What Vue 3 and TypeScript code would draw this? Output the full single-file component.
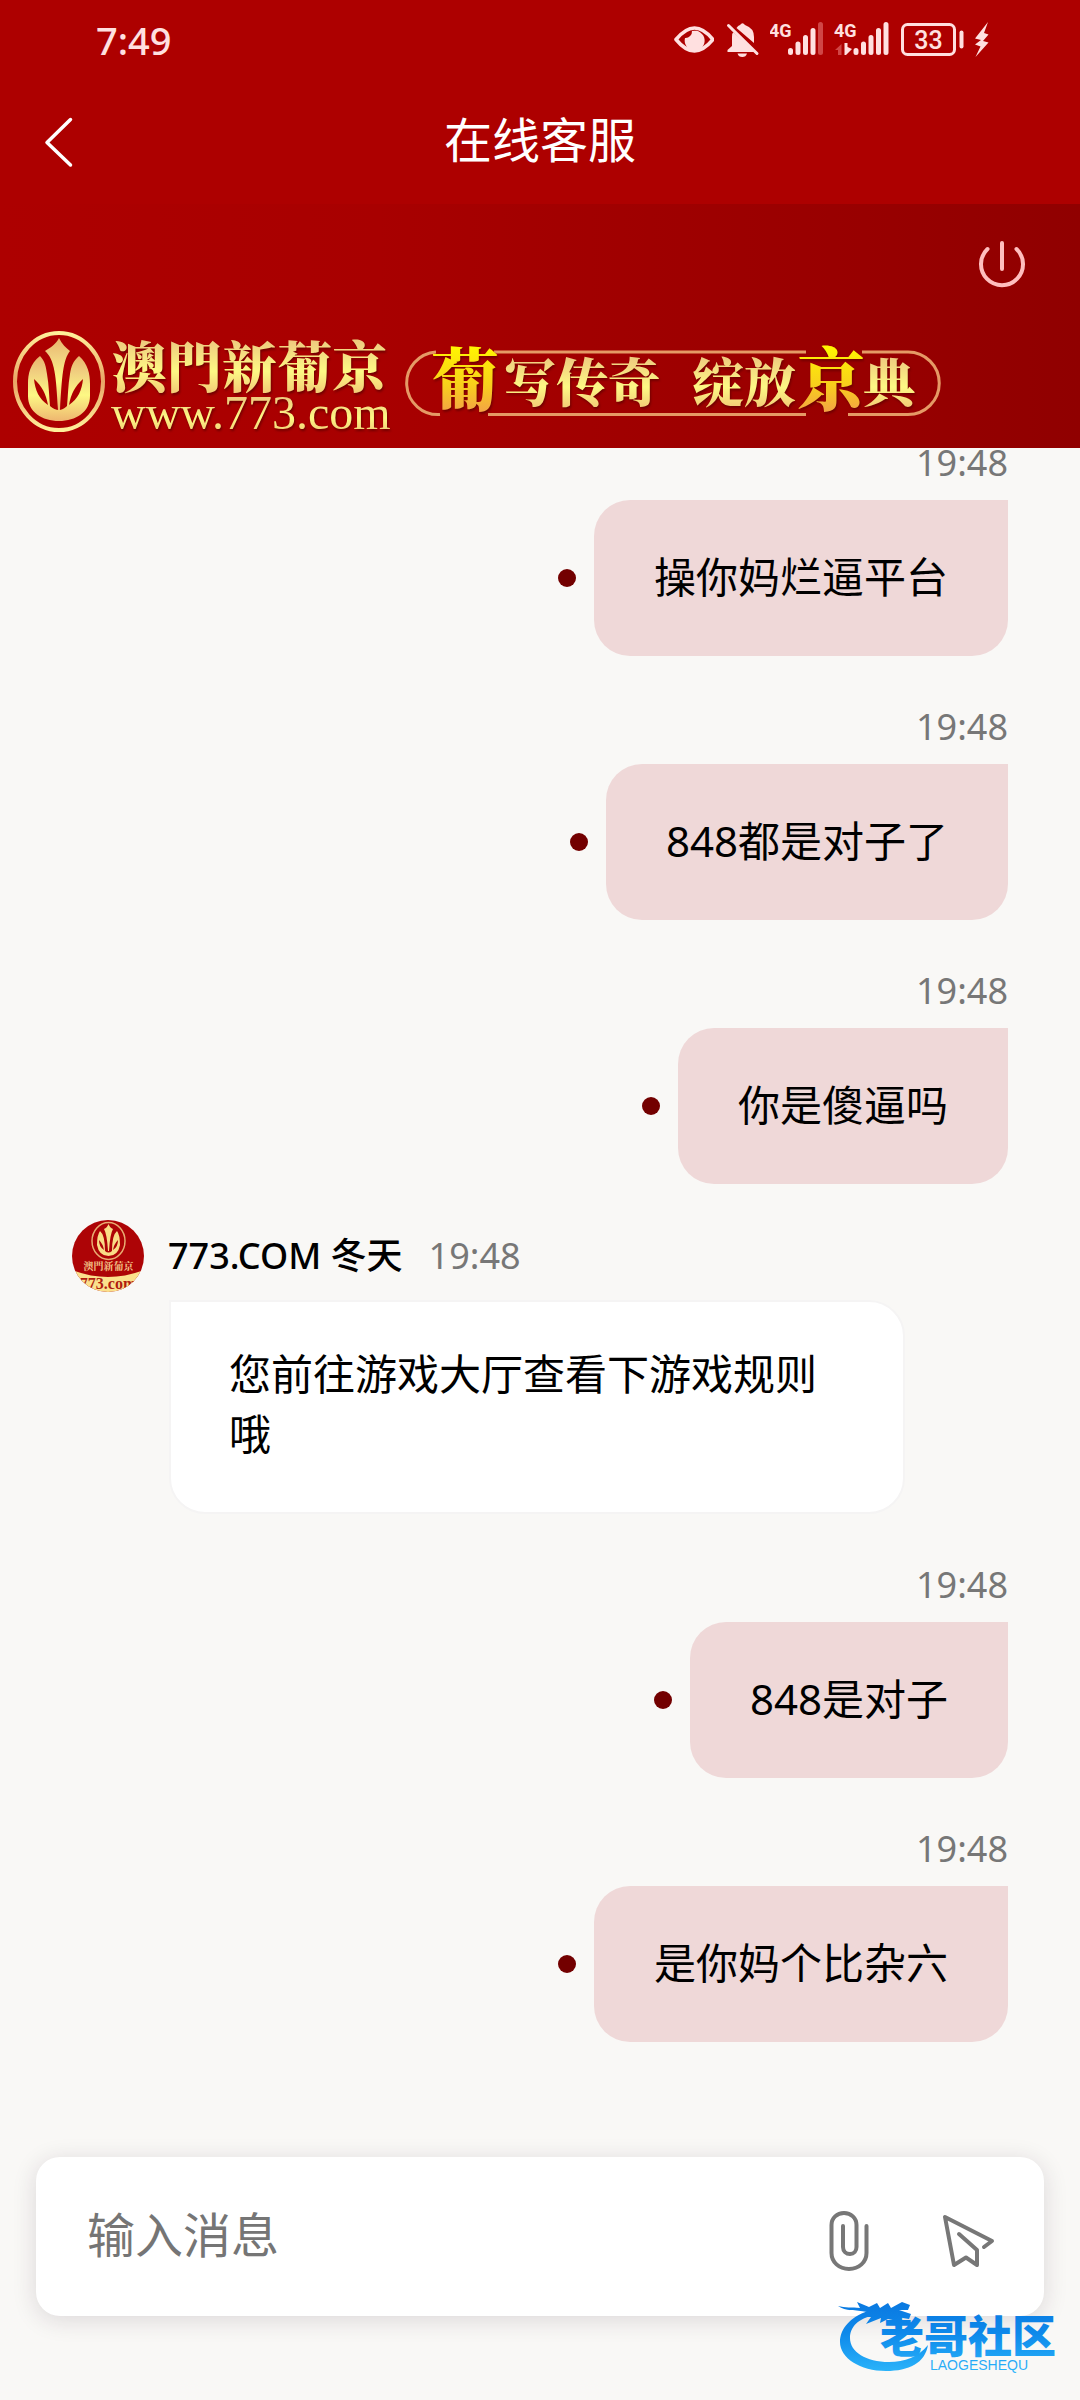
<script setup lang="ts">
import { ref } from 'vue'

interface Message {
  id: number
  from: 'me' | 'agent'
  text: string
  time: string
}

const messages: Message[] = [
  { id: 1, from: 'me', text: '操你妈烂逼平台', time: '19:48' },
  { id: 2, from: 'me', text: '848都是对子了', time: '19:48' },
  { id: 3, from: 'me', text: '你是傻逼吗', time: '19:48' },
  { id: 4, from: 'agent', text: '您前往游戏大厅查看下游戏规则哦', time: '19:48' },
  { id: 5, from: 'me', text: '848是对子', time: '19:48' },
  { id: 6, from: 'me', text: '是你妈个比杂六', time: '19:48' },
]

const draft = ref('')
</script>

<template>
  <div class="page">
    <header class="top">
      <div class="status">
        <span class="clock">7:49</span>
        <div class="status-icons">
          <svg width="40" height="40" viewBox="674 20 40 40" aria-hidden="true">
            <path d="M676 39.500C683 31 689 28 694.500 28S706 31 713 39.500C706 48 700 51 694.500 51S683 48 676 39.500Z" fill="none" stroke="#ffe0e0" stroke-width="3.600" stroke-linejoin="round" />
            <path d="M692 31A10 10 0 1 1 685 38A6.500 6.500 0 0 0 692 31Z" fill="#ffe0e0" />
          </svg>
          <svg width="36" height="40" viewBox="724 20 36 40" aria-hidden="true">
            <path d="M730 29L755 52H727.500V50L732 46V37Q732 33 734 31Z" fill="#ffe0e0" />
            <path d="M736.500 28Q738 25.500 740 25Q742.500 21.500 745 25Q754 28 754 37V43Z" fill="#ffe0e0" />
            <path d="M737.500 53.500H747Q746 57 742.300 57T737.500 53.500Z" fill="#ffe0e0" />
            <path d="M728.500 25.500L757 53.500" stroke="#ffe0e0" stroke-width="3" stroke-linecap="round" />
          </svg>
          <svg width="54" height="40" viewBox="770 20 54 40" aria-hidden="true">
            <text x="769" y="37" class="net">4G</text>
            <g stroke="#ffe0e0" stroke-width="5" stroke-linecap="round">
              <path d="M790.500 50.500V52.500M798 44V52.500M805.500 37.500V52.500M813 30.500V52.500" />
              <path d="M820.500 24.500V52.500" stroke="#d04646" />
            </g>
          </svg>
          <svg width="56" height="40" viewBox="834 20 56 40" aria-hidden="true">
            <text x="834" y="37" class="net">4G</text>
            <path d="M841.500 44V55H838V50H835Z" fill="#d04646" />
            <path d="M844.500 43H847.500V47L852 49L846 55H844.500Z" fill="#ffe0e0" />
            <path d="M856 50.500V52.500M863.500 44V52.500M871 37.500V52.500M878.500 30.500V52.500M886 24.500V52.500" stroke="#ffe0e0" stroke-width="5" stroke-linecap="round" />
          </svg>
          <svg width="64" height="40" viewBox="900 20 64 40" aria-hidden="true">
            <rect x="902.500" y="24.500" width="52" height="30" rx="5" fill="none" stroke="#ffe0e0" stroke-width="3" />
            <path d="M961.500 32.500V46.500" stroke="#ffe0e0" stroke-width="4" stroke-linecap="round" />
            <text x="928.500" y="49" text-anchor="middle" class="charge">33</text>
          </svg>
          <svg width="16" height="40" viewBox="973 20 16 40" aria-hidden="true">
            <path d="M987 22L974 38.500L980 40L974 44.500L979.500 46.500L974.500 57L987.500 42.500L982 41L987.500 34.500L983 33Z" fill="#ffe0e0" />
          </svg>
        </div>
      </div>
      <nav class="titlebar">
        <button type="button" class="icon-btn" aria-label="返回">
          <svg width="48" height="54" viewBox="34 114 48 54" aria-hidden="true">
            <path d="M70.500 118.500L47 141.500L70.500 164" fill="none" stroke="#fff" stroke-width="3.500" stroke-linecap="round" stroke-linejoin="round" />
          </svg>
        </button>
        <h1>在线客服</h1>
        <span></span>
      </nav>
    </header>

    <section class="banner">
      <button type="button" class="icon-btn power" aria-label="结束会话">
        <svg width="52" height="52" viewBox="976 238 52 52" aria-hidden="true">
          <path d="M987.500 249A21 21 0 1 0 1016.500 249M1002 243V269" fill="none" stroke="#ffbebe" stroke-width="4" stroke-linecap="round" />
        </svg>
      </button>
      <div class="brand">
        <svg width="380" height="108" viewBox="12 328 380 108" role="img" aria-label="澳門新葡京 www.773.com">
          <defs>
            <linearGradient id="gold" x1="0" y1="0" x2="0" y2="1">
              <stop offset="0" stop-color="#e9b56c" />
              <stop offset=".25" stop-color="#f0cf80" />
              <stop offset=".6" stop-color="#fdf884" />
              <stop offset="1" stop-color="#eeb670" />
            </linearGradient>
            <linearGradient id="ring" x1="0" y1="0" x2="0" y2="1">
              <stop offset="0" stop-color="#fff09a" />
              <stop offset=".5" stop-color="#e9a566" />
              <stop offset="1" stop-color="#fff09a" />
            </linearGradient>
          </defs>
          <ellipse cx="59" cy="381.500" rx="44" ry="48.500" fill="none" stroke="url(#ring)" stroke-width="4" />
          <path d="M40 356C30 364 28 374 28 384V396C28 412 42 421 59 421S90 412 90 396V384C90 374 88 364 79 356C73 361 71 367 70 374C68 385 68 396 67 406Q59 414 50 406C49 396 49 385 47 374C46 367 45 361 40 356Z" fill="url(#gold)" />
          <path d="M34 379C42 386 46 394 48 405C39 399 35 390 34 379ZM83 379C75 386 71 394 69 405C78 399 82 390 83 379Z" fill="#ad0000" />
          <path d="M59 338C62 344 66 348 70 351C63 360 62 376 60 410H58C56 376 55 360 45 351C50 348 56 344 59 338Z" fill="url(#gold)" />
          <g class="shade" fill="url(#gold)">
            <text x="112" y="387" class="brand-name">澳門新葡京</text>
            <text x="111" y="429" class="brand-url">www.773.com</text>
          </g>
        </svg>
        <svg width="538" height="108" viewBox="404 328 538 108" role="img" aria-label="葡写传奇 绽放京典">
          <defs>
            <linearGradient id="amber" x1="0" y1="0" x2="0" y2="1">
              <stop offset=".2" stop-color="#fff600" />
              <stop offset=".6" stop-color="#f8cf1c" />
              <stop offset=".9" stop-color="#f3a048" />
            </linearGradient>
          </defs>
          <path d="M436 352A31 31 0 0 0 440 414.500M494 352H806M488 414.500H806M862 352H908A31 31 0 0 1 908 414.500H848" fill="none" stroke="#e59a66" stroke-width="3" />
          <g class="shade" fill="url(#gold)">
            <text x="504" y="402" class="slogan">写传奇</text>
            <text x="692" y="402" class="slogan">绽放</text>
            <text x="863" y="402" class="slogan">典</text>
          </g>
          <g class="shade" fill="url(#amber)">
            <text x="431" y="405" class="accent">葡</text>
            <text x="797" y="405" class="accent">京</text>
          </g>
        </svg>
      </div>
    </section>

    <main class="chat">
      <template v-for="m in messages" :key="m.id">
        <article v-if="m.from === 'me'" class="mine">
          <time>{{ m.time }}</time>
          <div class="line">
            <i class="dot"></i>
            <p class="bubble">{{ m.text }}</p>
          </div>
        </article>
        <article v-else class="theirs">
          <div class="who">
            <svg class="avatar" width="72" height="72" viewBox="0 0 72 72" aria-hidden="true">
              <defs>
                <clipPath id="disc"><circle cx="36" cy="36" r="36" /></clipPath>
              </defs>
              <g clip-path="url(#disc)">
                <rect width="72" height="72" fill="#ad0406" />
                <path d="M0 50Q36 64 72 50V72H0Z" fill="#fbe08c" />
                <ellipse cx="36.500" cy="21" rx="16.500" ry="18.500" fill="none" stroke="#e8ac72" stroke-width="1.500" />
                <path d="M36.500 4Q38 8 41 9Q38 14 37 31H36Q35 14 32 9Q35 8 36.500 4ZM28 11Q33 15 33 31Q36.500 34 40 31Q40 15 45 11Q48 15 48 25Q46 36 36.500 36T25 25Q25 15 28 11Z" fill="#f9dc86" />
                <path d="M27 20Q31 24 32 30Q27 27 27 20ZM46 20Q42 24 41 30Q46 27 46 20Z" fill="#ad0406" />
                <text x="36.500" y="50" text-anchor="middle" class="mini-name">澳門新葡京</text>
                <text x="36" y="69" text-anchor="middle" class="mini-url">773.com</text>
              </g>
            </svg>
            <strong>773.COM 冬天</strong>
            <time>{{ m.time }}</time>
          </div>
          <p class="bubble">{{ m.text }}</p>
        </article>
      </template>
    </main>

    <footer class="composer">
      <form class="card" @submit.prevent>
        <input v-model="draft" type="text" placeholder="输入消息" aria-label="输入消息" />
        <button type="button" class="icon-btn" aria-label="添加附件">
          <svg width="60" height="80" viewBox="819 2197 60 80" aria-hidden="true">
            <path d="M866.500 2226V2253C866.500 2262 859 2269 849 2269S831.500 2262 831.500 2253V2225C831.500 2218 837 2213 844 2213S856.500 2218 856.500 2225V2247C856.500 2251 854 2254 850 2254S843 2251 843 2247V2226" />
          </svg>
        </button>
        <button type="submit" class="icon-btn" aria-label="发送">
          <svg width="60" height="80" viewBox="939 2197 60 80" aria-hidden="true">
            <path d="M984 2247L992 2241L945 2217L954 2265L966 2257.500L977 2265V2250L959 2234" />
          </svg>
        </button>
      </form>
      <svg class="mark" width="232" height="80" viewBox="834 2296 232 80" role="img" aria-label="老哥社区 LAOGESHEQU">
        <defs>
          <linearGradient id="sea" gradientUnits="userSpaceOnUse" x1="0" y1="2300" x2="0" y2="2372">
            <stop offset="0" stop-color="#0a78e0" />
            <stop offset=".45" stop-color="#0d88ea" />
            <stop offset="1" stop-color="#2bb4fa" />
          </linearGradient>
        </defs>
        <g fill="url(#sea)">
          <path d="M868 2311C850 2317 840 2329 840 2342C840 2358 860 2371 886 2371C909 2371 925 2363 928 2345C918 2357 905 2362 889 2362C866 2362 850 2352 850 2338C850 2327 858 2318 876 2315Z" />
          <path d="M838 2306C845 2308 852 2307 860 2308L857 2302L869 2307L877 2303L880 2308L888 2303L891 2308L902 2302L910 2305L908 2310H899L911 2314L909 2319L897 2317L907 2323L888 2319L880 2323L881 2318L866 2324L871 2317L862 2317L867 2312C855 2309 846 2312 838 2306Z" />
          <text x="880" y="2353" class="mark-name">老哥社区</text>
          <text x="930" y="2370" class="mark-sub">LAOGESHEQU</text>
        </g>
      </svg>
    </footer>
  </div>
</template>

<style>
body {
  margin: 0;
  background: #f9f8f6;
}
</style>

<style scoped>
.page {
  display: flex;
  flex-direction: column;
  min-height: 100vh;
  background: #f9f8f6;
  color: #000;
  font-family: "Noto Sans", "Noto Sans CJK SC", sans-serif;
}

.top {
  background: #ad0000;
  color: #fff;
}

.status {
  display: flex;
  align-items: center;
  justify-content: space-between;
  height: 80px;
  padding: 0 90px 0 96px;
}

.clock {
  color: #ffe0e0;
  font-size: 38px;
  font-weight: 500;
  line-height: 80px;
}

.status-icons {
  display: flex;
  gap: 10px;
}

.net {
  fill: #ffe0e0;
  font: 700 18px "Roboto", sans-serif;
}

.charge {
  fill: #ffe0e0;
  font: 500 25px "Roboto", sans-serif;
}

.titlebar {
  display: grid;
  grid-template-columns: 1fr auto 1fr;
  align-items: center;
  height: 124px;
  padding: 0 34px;
}

h1 {
  margin: 0;
  padding-bottom: 4px;
  font-size: 48px;
  font-weight: 400;
  line-height: 72px;
}

.icon-btn {
  display: flex;
  justify-self: start;
  padding: 0;
  border: 0;
  background: none;
}

.banner {
  display: flex;
  flex-direction: column;
  gap: 38px;
  padding: 34px 12px 12px;
  background: linear-gradient(90deg, #ad0000 0%, #a80000 35%, #980000 80%, #900000 100%);
}

.power {
  align-self: flex-end;
  margin-right: 40px;
}

.brand {
  display: flex;
  gap: 12px;
}

.brand svg {
  overflow: visible;
}

.shade {
  filter: drop-shadow(1px 2px 1px #700000);
}

.brand-name {
  font: 900 55px "Noto Serif CJK TC", "Noto Sans CJK TC", serif;
}

.brand-url {
  font: 400 48px "Liberation Serif", serif;
}

.slogan {
  font: 900 52px "Noto Serif CJK SC", "Noto Sans CJK SC", serif;
}

.accent {
  font: 900 68px "Noto Serif CJK SC", "Noto Sans CJK SC", serif;
}

.chat {
  display: flex;
  flex: 1;
  flex-direction: column;
  padding: 0 72px 56px;
}

.mine {
  display: flex;
  flex-direction: column;
  align-items: flex-end;
  gap: 22px;
}

.mine + .mine,
.theirs + .mine {
  margin-top: 56px;
}

time {
  color: #777;
  font-size: 36px;
  line-height: 30px;
}

.line {
  display: flex;
  align-items: center;
  gap: 18px;
}

.dot {
  width: 18px;
  height: 18px;
  border-radius: 50%;
  background: #730000;
}

.bubble {
  margin: 0;
  font-size: 42px;
  line-height: 60px;
}

.mine .bubble {
  padding: 47px 60px 49px;
  border-radius: 36px 0 36px 36px;
  background: #efd8d8;
}

.theirs {
  margin-top: 36px;
}

.who {
  display: flex;
  align-items: center;
}

.who strong {
  margin: 0 26px 0 24px;
  font-size: 36px;
  font-weight: 500;
  line-height: 48px;
}

.theirs .bubble {
  box-sizing: border-box;
  max-width: 736px;
  margin: 8px 0 0 97px;
  padding: 42px 58px 48px;
  border: 2px solid #f5f4f4;
  border-radius: 0 36px 36px 36px;
  background: #fff;
}

.mini-name {
  fill: #f3c489;
  font: 700 10px "Noto Serif CJK TC", "Noto Sans CJK TC", serif;
}

.mini-url {
  fill: #b01c10;
  font: 700 16px "Liberation Serif", serif;
}

.composer {
  position: relative;
  padding: 0 36px 84px;
}

.card {
  display: flex;
  align-items: center;
  gap: 60px;
  height: 159px;
  padding: 0 45px 0 51px;
  border-radius: 24px;
  background: #fff;
  box-shadow: 0 4px 24px rgba(40, 20, 40, 0.14);
}

.card input {
  flex: 1;
  min-width: 0;
  padding: 0 0 4px;
  border: 0;
  outline: 0;
  background: none;
  color: #000;
  font-family: inherit;
  font-size: 48px;
  line-height: 72px;
}

.card input::placeholder {
  color: #757575;
  opacity: 1;
}

.card svg {
  fill: none;
  stroke: #777;
  stroke-width: 4;
  stroke-linecap: round;
  stroke-linejoin: round;
}

.mark {
  position: absolute;
  right: 14px;
  bottom: 24px;
}

.mark-name {
  font: 900 44px "Noto Sans CJK SC", sans-serif;
}

.mark-sub {
  font: 400 14px "Liberation Sans", sans-serif;
}
</style>
